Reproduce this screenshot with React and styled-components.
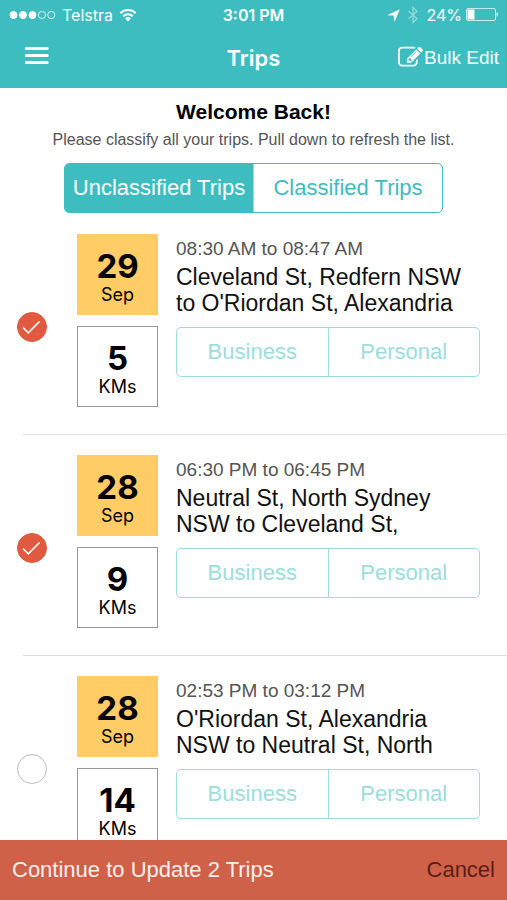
import React, { useState } from 'react';
import styled, { createGlobalStyle } from 'styled-components';

const GlobalStyles = createGlobalStyle`
    :root {
        --teal: #3dbdc0;
        --teal-light: #9bdedb;
        --yellow: #ffcc66;
        --red: #e05a3f;
        --bar-red: #cf6149;
        --helvetica: "Liberation Sans", Arial, sans-serif;
        --system: Inter, sans-serif;
    }
    * {
        box-sizing: border-box;
    }
    body {
        margin: 0;
        background-color: #fff;
        color: #111;
        font-family: var(--helvetica);
    }
    button {
        font-family: inherit;
        padding: 0;
        border: none;
        background: none;
        cursor: pointer;
    }
    h1, h2, p, ul {
        margin: 0;
        padding: 0;
    }
`;

const AppStyles = styled.div`
    height: 100vh;
    display: flex;
    flex-direction: column;
`;

const HeaderStyles = styled.header`
    flex: none;
    background-color: var(--teal);
    color: #fff;
`;

const StatusBarStyles = styled.div`
    display: grid;
    grid-template-columns: 1fr auto 1fr;
    align-items: center;
    height: 30px;
    padding: 0 8px;
    font-family: var(--system);
    font-size: 16px;
    line-height: 20px;
    .clock {
        font-weight: 600;
    }
`;

const StatusGroup = styled.div`
    display: flex;
    align-items: center;
    justify-content: ${(props) => (props.$end ? 'flex-end' : 'flex-start')};
    gap: ${(props) => (props.$end ? '4px' : '6px')};
`;

const NavBarStyles = styled.div`
    display: grid;
    grid-template-columns: 1fr auto 1fr;
    align-items: center;
    height: 58px;
    padding: 0 8px 3px;
    h1 {
        font-family: var(--system);
        font-size: 22px;
        line-height: 28px;
        font-weight: 600;
    }
`;

const NavButton = styled.button`
    display: flex;
    align-items: center;
    gap: 1px;
    justify-self: ${(props) => (props.$end ? 'end' : 'start')};
    padding-left: ${(props) => (props.$end ? '0' : '16px')};
    color: #fff;
    font-size: 19px;
    line-height: 28px;
    white-space: nowrap;
`;

const MainStyles = styled.main`
    flex: 1;
    min-height: 0;
    overflow-y: auto;
    scrollbar-width: none;
`;

const IntroStyles = styled.div`
    padding: 10px 16px 0;
    text-align: center;
    h2 {
        font-size: 21px;
        line-height: 28px;
        color: #000;
    }
    p {
        font-size: 16px;
        line-height: 28px;
        color: #555;
    }
`;

const Segmented = styled.div`
    display: flex;
    height: 50px;
    margin: ${(props) => props.$margin};
    border: 1px solid ${(props) => props.$color};
    border-radius: 5px;
    overflow: hidden;
`;

const Segment = styled.button`
    flex: 1;
    font-size: 22px;
    color: ${(props) => (props.$active ? '#fff' : props.$color)};
    background-color: ${(props) => (props.$active ? props.$color : 'transparent')};
    & + & {
        border-left: 1px solid ${(props) => props.$color};
    }
`;

const TripList = styled.ul`
    list-style: none;
    li + li::before {
        content: '';
        display: block;
        height: 1px;
        margin-left: 23px;
        background-color: #ddd;
    }
`;

const TripStyles = styled.article`
    display: flex;
    padding: 20px 27px 27px 17px;
`;

const Tick = styled.label`
    flex: none;
    align-self: center;
    display: grid;
    margin: 12px 30px 0 0;
    cursor: pointer;
    input,
    svg {
        grid-area: 1 / 1;
    }
    input {
        appearance: none;
        width: 30px;
        height: 30px;
        margin: 0;
        border: 1px solid #bbb;
        border-radius: 50%;
    }
    input:checked {
        border-color: var(--red);
        background-color: var(--red);
    }
    svg {
        visibility: hidden;
        pointer-events: none;
    }
    input:checked + svg {
        visibility: visible;
    }
`;

const Tiles = styled.div`
    flex: none;
    display: flex;
    flex-direction: column;
    gap: 11px;
    margin-right: 18px;
`;

const Tile = styled.div`
    width: 81px;
    height: 81px;
    padding-top: 13px;
    border: 1px solid ${(props) => (props.$filled ? 'var(--yellow)' : '#999')};
    background-color: ${(props) => (props.$filled ? 'var(--yellow)' : '#fff')};
    font-family: var(--system);
    text-align: center;
    color: #000;
    strong {
        display: block;
        font-size: 33px;
        line-height: 37px;
        font-weight: 700;
    }
    span {
        display: block;
        font-size: 18px;
        line-height: 20px;
    }
`;

const Details = styled.div`
    flex: 1;
    min-width: 0;
    padding-top: 4px;
    .time {
        margin-bottom: 4px;
        font-size: 19px;
        line-height: 22px;
        color: #555;
    }
    .route {
        height: 52px;
        margin-bottom: 11px;
        overflow: hidden;
        font-size: 23px;
        line-height: 26px;
        white-space: pre-line;
    }
`;

const FooterStyles = styled.footer`
    flex: none;
    display: flex;
    justify-content: space-between;
    height: 60px;
    padding: 0 12px;
    background-color: var(--bar-red);
`;

const FooterButton = styled.button`
    font-size: 22px;
    color: ${(props) => props.$color};
`;

const trips = [
    {
        id: 1,
        day: 29,
        month: 'Sep',
        kms: 5,
        time: '08:30 AM to 08:47 AM',
        route: "Cleveland St, Redfern NSW\nto O'Riordan St, Alexandria",
    },
    {
        id: 2,
        day: 28,
        month: 'Sep',
        kms: 9,
        time: '06:30 PM to 06:45 PM',
        route: 'Neutral St, North Sydney\nNSW to Cleveland St,',
    },
    {
        id: 3,
        day: 28,
        month: 'Sep',
        kms: 14,
        time: '02:53 PM to 03:12 PM',
        route: "O'Riordan St, Alexandria\nNSW to Neutral St, North",
    },
];

const SignalIcon = () => (
    <svg width='48' height='10' viewBox='0 0 48 10' fill='#fff' stroke='#fff'>
        <circle cx='5.5' cy='5' r='3.5' />
        <circle cx='15' cy='5' r='3.5' />
        <circle cx='24.5' cy='5' r='3.5' />
        <circle cx='34' cy='5' r='3.6' fill='none' strokeWidth='0.8' />
        <circle cx='43.3' cy='5' r='3.6' fill='none' strokeWidth='0.8' />
    </svg>
);

const WifiIcon = () => (
    <svg width='18' height='14' viewBox='0 0 18 14' fill='none' stroke='#fff' strokeWidth='2'>
        <path d='M1.4 5.2a10.8 10.8 0 0 1 15.2 0' />
        <path d='M4.2 8.2a7 7 0 0 1 9.6 0' />
        <path d='M9 13.4L6 10.3a4.2 4.2 0 0 1 6 0z' fill='#fff' stroke='none' />
    </svg>
);

const LocationIcon = () => (
    <svg width='13' height='13' viewBox='0 0 13 13' fill='#fff'>
        <path d='M12.8 0.3L7.6 12.8L6.6 6.6L0.2 6.2z' />
    </svg>
);

const BluetoothIcon = () => (
    <svg width='18' height='18' viewBox='0 0 18 18' fill='none' stroke='#8edadb' strokeWidth='1.3'>
        <path d='M4.5 5L13 12.8L9 16.5V1.5L13 5.2L4.5 13' />
    </svg>
);

const BatteryIcon = () => (
    <svg width='33' height='14' viewBox='0 0 33 14'>
        <rect x='0.5' y='0.5' width='29' height='12' rx='1.5' fill='none' stroke='#c5ecec' />
        <rect x='1.5' y='1.5' width='7' height='10' fill='#fff' />
        <path d='M30.6 4.3a2.4 2.4 0 0 1 0 4.5z' fill='#fff' />
    </svg>
);

const MenuIcon = () => (
    <svg width='26' height='24' viewBox='0 0 26 24' stroke='#fff' strokeWidth='3' strokeLinecap='round'>
        <path d='M2.3 2.5H23.2M2.3 9.5H23.2M2.3 16.5H23.2' />
    </svg>
);

const EditIcon = () => (
    <svg width='25' height='25' viewBox='0 0 1792 1792' fill='currentColor'>
        <path d='M888 1184l116-116-152-152-116 116v56h96v96h56zm440-720q-16-16-33 1l-350 350q-17 17-1 33t33-1l350-350q17-17 1-33zm80 594v190q0 119-84.5 203.5t-203.5 84.5h-832q-119 0-203.5-84.5t-84.5-203.5v-832q0-119 84.5-203.5t203.5-84.5h832q63 0 117 25 15 7 18 23 3 17-9 29l-49 49q-14 14-32 8-23-6-45-6h-832q-66 0-113 47t-47 113v832q0 66 47 113t113 47h832q66 0 113-47t47-113v-126q0-13 9-22l64-64q15-15 35-7t20 29zm-96-738l288 288-672 672h-288v-288zm444 132l-92 92-288-288 92-92q28-28 68-28t68 28l152 152q28 28 28 68t-28 68z' />
    </svg>
);

const StatusBar = () => (
    <StatusBarStyles>
        <StatusGroup>
            <SignalIcon />
            <span>Telstra</span>
            <WifiIcon />
        </StatusGroup>
        <span className='clock'>3:01 PM</span>
        <StatusGroup $end>
            <LocationIcon />
            <BluetoothIcon />
            <span>24%</span>
            <BatteryIcon />
        </StatusGroup>
    </StatusBarStyles>
);

const Header = () => (
    <HeaderStyles>
        <StatusBar />
        <NavBarStyles>
            <NavButton aria-label='Menu'>
                <MenuIcon />
            </NavButton>
            <h1>Trips</h1>
            <NavButton $end>
                <EditIcon />
                Bulk Edit
            </NavButton>
        </NavBarStyles>
    </HeaderStyles>
);

const Trip = ({ trip, checked, onToggle }) => (
    <TripStyles>
        <Tick>
            <input type='checkbox' checked={checked} onChange={onToggle} aria-label={`Select trip ${trip.time}`} />
            <svg width='30' height='30' viewBox='0 0 30 30' fill='none' stroke='#fff' strokeWidth='1.6'>
                <path d='M6 15.5L11.3 20.8L22.5 9.5' />
            </svg>
        </Tick>
        <Tiles>
            <Tile $filled>
                <strong>{trip.day}</strong>
                <span>{trip.month}</span>
            </Tile>
            <Tile>
                <strong>{trip.kms}</strong>
                <span>KMs</span>
            </Tile>
        </Tiles>
        <Details>
            <p className='time'>{trip.time}</p>
            <p className='route'>{trip.route}</p>
            <Segmented $margin='0' $color='var(--teal-light)'>
                <Segment $color='var(--teal-light)'>Business</Segment>
                <Segment $color='var(--teal-light)'>Personal</Segment>
            </Segmented>
        </Details>
    </TripStyles>
);

const App = () => {
    const [tab, setTab] = useState('unclassified');
    const [selected, setSelected] = useState([1, 2]);

    const toggle = (id) => {
        setSelected(selected.includes(id) ? selected.filter((item) => item !== id) : [...selected, id]);
    };

    return (
        <AppStyles>
            <GlobalStyles />
            <Header />
            <MainStyles>
                <IntroStyles>
                    <h2>Welcome Back!</h2>
                    <p>Please classify all your trips. Pull down to refresh the list.</p>
                </IntroStyles>
                <Segmented $margin='9px 64px 1px' $color='var(--teal)'>
                    <Segment
                        $color='var(--teal)'
                        $active={tab === 'unclassified'}
                        onClick={() => setTab('unclassified')}
                    >
                        Unclassified Trips
                    </Segment>
                    <Segment
                        $color='var(--teal)'
                        $active={tab === 'classified'}
                        onClick={() => setTab('classified')}
                    >
                        Classified Trips
                    </Segment>
                </Segmented>
                <TripList>
                    {trips.map((trip) => (
                        <li key={trip.id}>
                            <Trip
                                trip={trip}
                                checked={selected.includes(trip.id)}
                                onToggle={() => toggle(trip.id)}
                            />
                        </li>
                    ))}
                </TripList>
            </MainStyles>
            <FooterStyles>
                <FooterButton $color='#fdeeea'>{`Continue to Update ${selected.length} Trips`}</FooterButton>
                <FooterButton $color='#5c1e14' onClick={() => setSelected([])}>
                    Cancel
                </FooterButton>
            </FooterStyles>
        </AppStyles>
    );
};

export default App;
